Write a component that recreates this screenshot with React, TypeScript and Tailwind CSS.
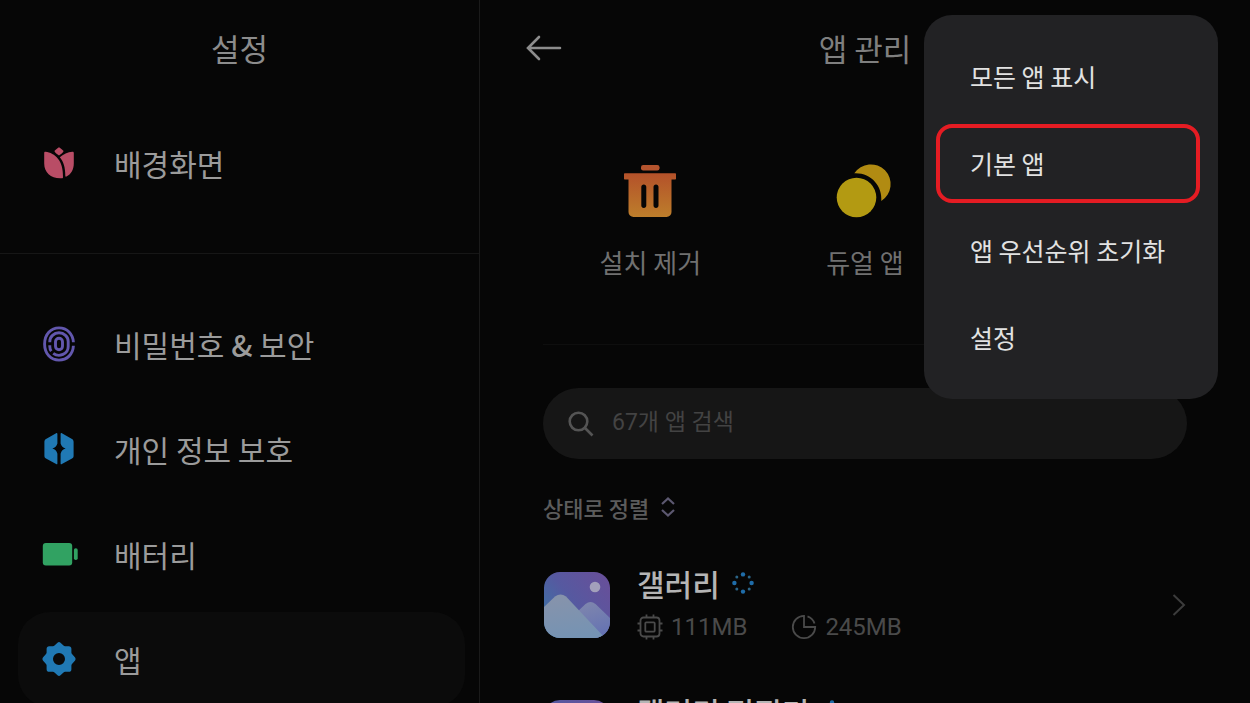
import { useId, type ReactNode } from "react";

function TulipIcon() {
  return (
    <svg width="36" height="36" viewBox="0 0 36 36" fill="#b94d66">
      <path d="M18 2.2c1.400.9 3.400 2.200 4.600 3.800-.4 1.400-3 3.500-4.600 4.600-1.600-1.100-4.200-3.200-4.600-4.600 1.200-1.600 3.200-2.900 4.600-3.800z" />
      <path d="M3.200 8c0-.8.500-1.300 1.300-1.200C14 8 22.500 15.500 22 32.200c0 .6-.4 1-1 1-10.500.8-17.800-5.200-17.800-14.700z" />
      <path d="M18.800 12.300c3.400-3.200 8-5.200 12.600-5.600.8-.1 1.400.4 1.400 1.200v10.600c0 6-2.800 10.700-7.300 13.100-.7.4-1.200 0-1.200-.8 0-8.500-1.800-14-5.500-18.500z" />
    </svg>
  );
}

function FingerprintIcon() {
  return (
    <svg width="36" height="36" viewBox="0 0 36 36" fill="none" stroke="#6257ad" strokeWidth="2.900">
      <rect x="14.500" y="12.300" width="7" height="11.400" rx="3.500" />
      <path d="M8.800 16.300v-.8a9.200 8.700 0 0 1 18.400 0v5a9.200 8.700 0 0 1-15 6.800M8.800 19.300v1.200c0 1.800.5 3.400 1.500 4.700" />
      <path d="M32.400 16.300C32 7.800 26 1.900 18 1.900S3.600 8 3.600 18 10 34.100 18 34.100 32 28.300 32.400 19.800" />
    </svg>
  );
}

function PrivacyIcon() {
  return (
    <svg width="36" height="36" viewBox="0 0 36 36" fill="#2079b4">
      <path d="M16.400 3v9.500c-.8 2.800-2.300 4.300-5 5.100 2.700.8 4.200 2.300 5 5.100v9.700c0 .9-.6 1.100-1.300.7L5 27.600c-1.100-.7-1.600-1.500-1.600-2.800V10.900c0-1.300.5-2.100 1.600-2.800l10.100-5.800c.7-.4 1.300-.2 1.300.7z" />
      <path d="M19.600 3v9.500c.8 2.800 2.300 4.300 5 5.100-2.700.8-4.200 2.300-5 5.100v9.700c0 .9.600 1.100 1.300.7L31 27.600c1.100-.7 1.600-1.500 1.600-2.800V10.900c0-1.300-.5-2.100-1.600-2.800L20.900 2.300c-.7-.4-1.300-.2-1.300.7z" />
    </svg>
  );
}

function BatteryIcon() {
  return (
    <svg width="36" height="36" viewBox="0 0 36 36" fill="#31a262" className="overflow-visible">
      <rect x="1.800" y="7" width="29.400" height="22.400" rx="3" />
      <rect x="32.900" y="12.200" width="3.800" height="11.800" rx="1.800" />
    </svg>
  );
}

function GearIcon() {
  return (
    <svg width="36" height="36" viewBox="0 0 36 36" fill="#2079b4">
      <path
        fillRule="evenodd"
        d="M16.500 1.700q1.500-1.200 3 0l3 2.900q.7.600 1.600.6h3.700q2.500 0 2.600 2.600v3.700q0 .9.600 1.600l3.100 3.400q1.100 1.500 0 3L31 22.900q-.6.700-.6 1.600v3.700q-.1 2.600-2.600 2.600h-3.700q-.9 0-1.600.6l-3 2.900q-1.500 1.200-3 0l-3-2.900q-.7-.6-1.600-.6H8.200q-2.500 0-2.600-2.600v-3.700q0-.9-.6-1.600l-3.100-3.400q-1.100-1.500 0-3L5 13.100q.6-.7.6-1.600V7.800q.1-2.600 2.600-2.600h3.700q.9 0 1.600-.6zM18 12a6 6 0 1 0 0 12 6 6 0 0 0 0-12z"
      />
    </svg>
  );
}

function TrashIcon() {
  return (
    <svg width="54" height="54" viewBox="0 0 54 54">
      <defs>
        <linearGradient id="trash" x1="0" y1="0" x2="0" y2="1">
          <stop offset="0" stopColor="#b4512a" />
          <stop offset="1" stopColor="#bd7e2b" />
        </linearGradient>
      </defs>
      <rect x="18" y="1" width="18.500" height="5.500" rx="2.200" fill="#b4542e" />
      <path
        fill="url(#trash)"
        fillRule="evenodd"
        d="M2 9.300h50c.6 0 1 .4 1 1v4.200c0 .6-.4 1-1 1h-3.500V48a5 5 0 0 1-5 5h-33a5 5 0 0 1-5-5V15.500H2c-.6 0-1-.4-1-1v-4.200c0-.6.400-1 1-1zM20.800 20.500c-1.500 0-2.500 1-2.500 2.500v18.500c0 1.500 1 2.500 2.500 2.500s2.500-1 2.500-2.500V23c0-1.500-1-2.500-2.500-2.500zM33 20.500c-1.500 0-2.500 1-2.500 2.500v18.500c0 1.500 1 2.500 2.500 2.500s2.500-1 2.500-2.500V23c0-1.500-1-2.500-2.500-2.500z"
      />
    </svg>
  );
}

function DualIcon() {
  return (
    <svg width="54" height="54" viewBox="0 0 54 54" className="overflow-visible">
      <circle cx="18.500" cy="33.500" r="19.800" fill="#b39a12" />
      <path d="M16.300 9.300A19.800 19.800 0 1 1 43.300 37C44.500 22 33 8.500 16.300 9.300z" fill="#b18b12" />
    </svg>
  );
}

function GalleryIcon() {
  const id = useId();
  return (
    <svg width="66" height="66" viewBox="0 0 66 66" className="shrink-0">
      <defs>
        <clipPath id={`${id}c`}>
          <rect width="66" height="66" rx="16" />
        </clipPath>
        <linearGradient id={`${id}s`} x1="0" y1="0.8" x2="0.9" y2="0.1">
          <stop offset="0" stopColor="#3a74a6" />
          <stop offset="0.5" stopColor="#5659a0" />
          <stop offset="1" stopColor="#66509a" />
        </linearGradient>
        <linearGradient id={`${id}m`} x1="0.3" y1="0" x2="0.5" y2="1">
          <stop offset="0" stopColor="#8793ab" />
          <stop offset="1" stopColor="#7593b3" />
        </linearGradient>
        <linearGradient id={`${id}b`} x1="0.3" y1="0" x2="0.6" y2="1">
          <stop offset="0" stopColor="#7f86ad" />
          <stop offset="1" stopColor="#6472b3" />
        </linearGradient>
      </defs>
      <g clipPath={`url(#${id}c)`}>
        <rect width="66" height="66" fill={`url(#${id}s)`} />
        <circle cx="51" cy="15" r="5.300" fill="#a3a0bb" />
        <path d="M30 43l11.500-11q5-4 10 0L66 46v20H40z" fill={`url(#${id}b)`} />
        <path d="M0 35l11-10.500q5.500-4 11 0L61 66H0z" fill={`url(#${id}m)`} />
      </g>
    </svg>
  );
}

function DotsIcon() {
  return (
    <svg width="22" height="22" viewBox="0 0 22 22" fill="#1f6ca8">
      <circle cx="11" cy="2.400" r="2.200" />
      <circle cx="19.600" cy="11" r="2.200" />
      <circle cx="11" cy="19.600" r="2.200" />
      <circle cx="2.400" cy="11" r="2.200" />
      <g fill="#2b6588">
        <circle cx="17.200" cy="4.900" r="1.500" />
        <circle cx="17.200" cy="17.100" r="1.500" />
        <circle cx="4.800" cy="17.100" r="1.500" />
        <circle cx="4.800" cy="4.900" r="1.500" />
      </g>
    </svg>
  );
}

function ChipIcon() {
  return (
    <svg width="26" height="26" viewBox="0 0 26 26" fill="none" stroke="currentColor" strokeWidth="1.800">
      <rect x="3.500" y="3.500" width="19" height="19" rx="3" />
      <rect x="8.300" y="8.300" width="9.400" height="9.400" rx="1" />
      <path d="M9.500 3.500V.5M16.500 3.500V.5M9.500 22.500v3M16.500 22.500v3M3.500 9.500h-3M3.500 16.500h-3M22.500 9.500h3M22.500 16.500h3" />
    </svg>
  );
}

function UsageIcon() {
  return (
    <svg width="26" height="26" viewBox="0 0 26 26" fill="none" stroke="currentColor" strokeWidth="1.800">
      <path d="M13 1.800V13h11.200A11.200 11.200 0 1 1 13 1.800z" />
      <path d="M16.500 2.400a11.200 11.200 0 0 1 7 7.200" />
    </svg>
  );
}

type NavItem = { label: ReactNode; icon: ReactNode; active?: boolean };

const navItems: NavItem[] = [
  {
    label: (
      <>
        비밀번호 <span className="font-medium">&amp;</span> 보안
      </>
    ),
    icon: <FingerprintIcon />,
  },
  { label: "개인 정보 보호", icon: <PrivacyIcon /> },
  { label: "배터리", icon: <BatteryIcon /> },
  { label: "앱", icon: <GearIcon />, active: true },
];

const apps = [
  { name: "갤러리", memory: "111MB", storage: "245MB" },
  { name: "갤러리 편집기", memory: "", storage: "" },
];

const menuItems = ["모든 앱 표시", "기본 앱", "앱 우선순위 초기화", "설정"];

function NavLink({ label, icon, active }: NavItem) {
  return (
    <a
      href="#"
      aria-current={active ? "page" : undefined}
      className={`flex h-[95px] items-center gap-[37px] rounded-[32px] px-[23px] pb-0.5 text-[30px] leading-10 text-[#9b9b9b] ${
        active ? "bg-[#0b0b0b]" : ""
      }`}
    >
      {icon}
      <span>{label}</span>
    </a>
  );
}

function Sidebar() {
  return (
    <aside className="w-[480px] shrink-0 border-r border-[#1a1a1a]">
      <h1 className="py-7 text-center text-[31px] leading-10 text-[#8c8c8c]">설정</h1>
      <nav>
        <div className="border-b border-[#161616] pt-5 pr-3.5 pb-[42px] pl-[18px]">
          <NavLink label="배경화면" icon={<TulipIcon />} />
        </div>
        <div className="flex flex-col gap-2.5 pt-[43px] pr-3.5 pl-[18px]">
          {navItems.map((item, i) => (
            <NavLink key={i} {...item} />
          ))}
        </div>
      </nav>
    </aside>
  );
}

function QuickAction({ label, icon }: { label: string; icon: ReactNode }) {
  return (
    <button className="flex flex-col items-center gap-6 text-[26px] leading-10 text-[#707070]">
      {icon}
      {label}
    </button>
  );
}

function AppRow({ name, memory, storage }: (typeof apps)[number]) {
  return (
    <li className="h-32">
      <a href="#" className="flex items-center gap-[27px] px-px">
        <GalleryIcon />
        <div className="flex-1">
          <div className="flex items-center gap-3">
            <h3 className="text-[30px] leading-[44px] font-medium text-[#b5b5b5]">{name}</h3>
            <DotsIcon />
          </div>
          <div className="flex h-[44px] items-center gap-11 font-[Roboto] text-2xl text-[#4a4a4a]">
            {memory && (
              <span className="flex items-center gap-2">
                <ChipIcon />
                {memory}
              </span>
            )}
            {storage && (
              <span className="flex items-center gap-2">
                <UsageIcon />
                {storage}
              </span>
            )}
          </div>
        </div>
        <svg width="14" height="24" viewBox="0 0 14 24" fill="none" stroke="#3c3c3c" strokeWidth="2">
          <path d="M1.500 2l10.500 10L1.500 22" />
        </svg>
      </a>
    </li>
  );
}

function OptionsMenu() {
  return (
    <div
      role="menu"
      className="absolute top-[15px] right-8 flex w-[294px] flex-col gap-2 rounded-[28px] bg-[#222224] py-[22px] pr-[18px] pl-3"
    >
      {menuItems.map((item) => (
        <button
          key={item}
          role="menuitem"
          className={`h-[79px] rounded-2xl border-4 pl-[30px] text-left text-[25px] whitespace-nowrap text-[#e2e2e2] ${
            item === "기본 앱" ? "border-[#e51c23]" : "border-transparent"
          }`}
        >
          {item}
        </button>
      ))}
    </div>
  );
}

export default function App() {
  return (
    <div className="relative flex h-screen overflow-hidden bg-[#060606] font-['Noto_Sans_CJK_KR',sans-serif]">
      <Sidebar />

      <main className="min-w-0 flex-1">
        <header className="grid grid-cols-[1fr_auto_1fr] items-center py-7 pl-[46px]">
          <button aria-label="뒤로" className="justify-self-start">
            <svg width="36" height="26" viewBox="0 0 36 26" fill="none" stroke="#8c8c8c" strokeWidth="2.600" strokeLinecap="round">
              <path d="M34 13H2.500M13 2L2 13l11 11" />
            </svg>
          </button>
          <h2 className="pr-[46px] text-[31px] leading-10 text-[#7f7f7f]">앱 관리</h2>
        </header>

        <div className="px-[63px]">
          <section className="grid grid-cols-3 border-b border-[#0e0e0e] pt-[68px] pb-[62px]">
            <QuickAction label="설치 제거" icon={<TrashIcon />} />
            <QuickAction label="듀얼 앱" icon={<DualIcon />} />
          </section>

          <label className="mt-[43px] flex h-[71px] items-center gap-[18px] rounded-full bg-[#161616] px-[25px]">
            <svg width="26" height="26" viewBox="0 0 26 26" fill="none" stroke="#545454" strokeWidth="2.600" aria-label="검색">
              <circle cx="10.500" cy="10.500" r="8.800" />
              <path d="M17 17l7.500 7.500" />
            </svg>
            <input
              type="search"
              placeholder="67개 앱 검색"
              className="min-w-0 flex-1 bg-transparent font-[Roboto,'Noto_Sans_CJK_KR',sans-serif] text-[23px] text-[#9b9b9b] outline-none placeholder:text-[#434343]"
            />
          </label>

          <button className="mt-[30px] flex items-center gap-3 text-[22px] leading-9 font-medium text-[#5c5c5c]">
            상태로 정렬
            <svg width="14" height="20" viewBox="0 0 14 20" fill="none" stroke="#5c5870" strokeWidth="2.200">
              <path d="M1 7l6-5.500L13 7M1 13l6 5.500 6-5.500" />
            </svg>
          </button>

          <ul className="mt-9">
            {apps.map((app) => (
              <AppRow key={app.name} {...app} />
            ))}
          </ul>
        </div>
      </main>

      <OptionsMenu />
    </div>
  );
}
